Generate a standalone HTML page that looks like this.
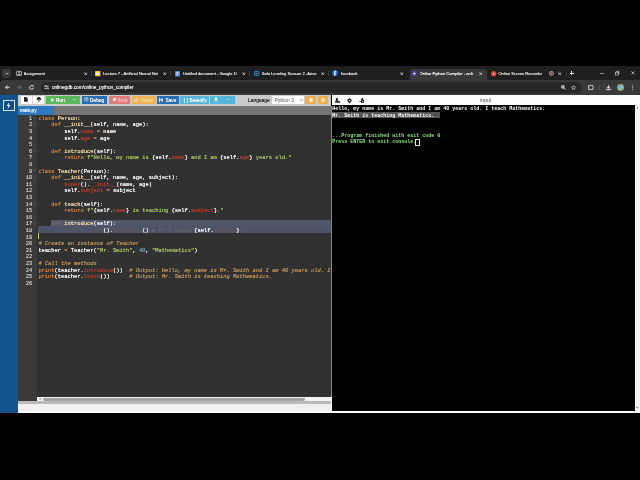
<!DOCTYPE html>
<html>
<head>
<meta charset="utf-8">
<title>Online Python Compiler</title>
<style>
html,body{margin:0;padding:0;background:#000;}
body{width:640px;height:480px;position:relative;overflow:hidden;will-change:transform;opacity:0.999;font-family:"Liberation Sans",sans-serif;}
.abs{position:absolute;}
svg{position:absolute;overflow:visible;}
#tabstrip{left:0;top:66.3px;width:640px;height:14px;background:#202020;}
#navbar{left:0;top:79.8px;width:640px;height:15.7px;background:#3a3a3a;border-radius:2.5px 0 0 0;}
.tabtxt{position:absolute;top:71.1px;font-size:4.08px;color:#e3e3e3;white-space:nowrap;line-height:5px;height:5px;overflow:hidden;text-shadow:0 0 0.35px #e3e3e3;}
.tx{position:absolute;top:71.6px;width:3.4px;height:3.4px;}
.sep{position:absolute;top:71px;width:0.6px;height:4.8px;background:#3e3e3e;}
#sidebar{left:0;top:95.4px;width:17.9px;height:318px;background:#13568f;}
#toolbar{left:17.9px;top:95.4px;width:313.6px;height:10.5px;background:#cbcbcb;}
.btn{position:absolute;top:95.6px;height:8.2px;}
.bt{position:absolute;top:97.95px;font-size:4.8px;line-height:5px;color:#fff;white-space:nowrap;text-shadow:0 0 0.3px #fff;}
#tabrow{left:17.9px;top:105.8px;width:313.6px;height:8.8px;background:#757575;}
#gutter{left:17.9px;top:114.5px;width:19.3px;height:286.5px;background:#3b3b3b;}
#code{left:37.2px;top:114.5px;width:294.3px;height:282.3px;background:#323232;overflow:hidden;}
.ln{position:absolute;left:17.9px;width:14.4px;text-align:right;font-family:"Liberation Mono",monospace;font-size:5.4px;line-height:6.6px;height:6.6px;color:#c4c4c4;text-shadow:0 0 0.3px #c4c4c4;}
.cl{position:absolute;left:1.2px;font-family:"Liberation Mono",monospace;font-size:5.41px;line-height:6.6px;height:6.6px;color:#ffffff;white-space:pre;text-shadow:0 0 0.35px currentColor;}
.cl span{text-shadow:0 0 0.35px currentColor;}
.k,.p{color:#cb8040;} .s{color:#a5c261;} .cl .v{color:#b53c2e;text-shadow:0 0 0.2px #b53c2e;} .c{color:#bc9458;font-style:italic;} .n{color:#6c99bb;} .f{color:#f6dba6;} .o{color:#b98a62;}
.cl .k2{color:#a26c5c;text-shadow:none;} .cl .k3{color:#595c69;text-shadow:none;} .cl .v3{color:#5e5564;text-shadow:none;} .cl .v4{color:#74505c;text-shadow:none;} .cl .s3{color:#66705f;text-shadow:none;} .cl .t3{color:#8a8f9c;text-shadow:none;}
#console{left:331.6px;top:105px;width:303.2px;height:306.1px;background:#000;overflow:hidden;}
.co{position:absolute;left:0.6px;font-family:"Liberation Mono",monospace;font-size:5px;line-height:6.6px;height:6.6px;color:#fff;white-space:pre;font-weight:bold;}
.g{color:#8fe88f;}
</style>
</head>
<body>
<!-- ============ chrome tab strip ============ -->
<div class="abs" id="tabstrip"></div>
<div class="abs" style="left:409.8px;top:68.6px;width:76.8px;height:11.6px;background:#3a3a3a;border-radius:2.6px 2.6px 0 0;"></div>
<div class="abs" id="navbar"></div>
<svg style="left:407.3px;top:77.4px" width="2.5" height="2.5" viewBox="0 0 2.5 2.5"><path d="M2.5 0 V2.5 H0 Q2.5 2.5 2.5 0 Z" fill="#3a3a3a"/></svg>
<svg style="left:486.6px;top:77.4px" width="2.5" height="2.5" viewBox="0 0 2.5 2.5"><path d="M0 0 V2.5 H2.5 Q0 2.5 0 0 Z" fill="#3a3a3a"/></svg>
<!-- tab search button -->
<div class="abs" style="left:2.1px;top:69.3px;width:8.8px;height:8.5px;border-radius:2.4px;background:#3b3b3b;"></div>
<svg style="left:4.6px;top:72px" width="3.8" height="3" viewBox="0 0 3.8 3"><path d="M0.7 0.8 L1.9 2.1 L3.1 0.8" stroke="#e8e8e8" stroke-width="0.75" fill="none"/></svg>

<!-- favicons -->
<svg style="left:15.9px;top:71px" width="5.9" height="4.8" viewBox="0 0 5.2 4.8" preserveAspectRatio="none"><rect x="0.35" y="0.35" width="4.5" height="4" rx="0.4" fill="none" stroke="#dcdcdc" stroke-width="0.7"/><circle cx="2.6" cy="1.8" r="0.8" fill="#dcdcdc"/><path d="M1.2 3.9 Q2.6 2.3 4 3.9 Z" fill="#dcdcdc"/></svg>
<svg style="left:95.2px;top:70.8px" width="5.4" height="5.2" viewBox="0 0 5.4 5.2"><rect x="0" y="0" width="5.4" height="5.2" rx="0.6" fill="#f4c430"/><rect x="1" y="1.5" width="3.4" height="2.2" fill="#fff3c2"/></svg>
<svg style="left:174.6px;top:70.6px" width="5" height="5.6" viewBox="0 0 5 5.6"><rect x="0" y="0" width="5" height="5.6" rx="0.6" fill="#4a86e8"/><rect x="1.1" y="1.5" width="2.8" height="0.6" fill="#fff"/><rect x="1.1" y="2.6" width="2.8" height="0.6" fill="#fff"/><rect x="1.1" y="3.7" width="1.8" height="0.6" fill="#fff"/></svg>
<svg style="left:253.6px;top:70.9px" width="5.4" height="5" viewBox="0 0 5.4 5"><rect x="0.4" y="0.4" width="4.6" height="4.2" rx="0.9" fill="#1d2a36" stroke="#3f9fd8" stroke-width="0.8"/><path d="M1.7 2.5 H3.7 M2.2 1.7 V3.3" stroke="#8fd0f5" stroke-width="0.6"/></svg>
<svg style="left:332.1px;top:70.4px" width="6" height="6" viewBox="0 0 5.8 5.8"><circle cx="2.9" cy="2.9" r="2.9" fill="#1666dc"/><path d="M3.25 5.7 V3.5 H4 L4.15 2.6 H3.25 V2.1 Q3.25 1.6 3.8 1.6 H4.2 V0.85 Q3.8 0.78 3.4 0.78 Q2.3 0.78 2.3 1.95 V2.6 H1.55 V3.5 H2.3 V5.7 Z" fill="#fff"/></svg>
<svg style="left:412px;top:70.8px" width="4.6" height="5" viewBox="0 0 4.6 5"><rect x="0" y="0" width="4.6" height="5" rx="0.8" fill="#4f3fa0"/><path d="M2.3 0.9 L2.8 2.1 L3.9 2.5 L2.8 2.9 L2.3 4.1 L1.8 2.9 L0.7 2.5 L1.8 2.1 Z" fill="#fff"/></svg>
<svg style="left:490.6px;top:70.7px" width="5.4" height="5.4" viewBox="0 0 5.4 5.4"><circle cx="2.7" cy="2.7" r="2.7" fill="#e0443a"/><circle cx="2.7" cy="2.7" r="0.9" fill="#ffd2cc"/></svg>
<svg style="left:548.8px;top:71px" width="4.8" height="4.8" viewBox="0 0 4.8 4.8"><circle cx="2.4" cy="2.4" r="2" fill="none" stroke="#e0c6c2" stroke-width="0.75"/><circle cx="2.4" cy="2.4" r="1.1" fill="#c9746e"/></svg>

<!-- tab titles -->
<div class="tabtxt" style="left:23.7px;width:56px">Assignment</div>
<div class="tabtxt" style="left:103.1px;width:55px">Lecture 7 - Artificial Neural Net</div>
<div class="tabtxt" style="left:182.9px;width:55px">Untitled document - Google D</div>
<div class="tabtxt" style="left:261.8px;width:55px">Solo Leveling Season 2 -Arise f</div>
<div class="tabtxt" style="left:341px;width:55px">facebook</div>
<div class="tabtxt" style="left:419.5px;width:55px;color:#fff">Online Python Compiler - onli</div>
<div class="tabtxt" style="left:498.4px;width:44px">Online Screen Recorder</div>

<!-- close x -->
<svg class="tx" style="left:83.6px" viewBox="0 0 3.4 3.4"><path d="M0.5 0.5 L2.9 2.9 M2.9 0.5 L0.5 2.9" stroke="#f0f0f0" stroke-width="0.78"/></svg>
<svg class="tx" style="left:162.7px" viewBox="0 0 3.4 3.4"><path d="M0.5 0.5 L2.9 2.9 M2.9 0.5 L0.5 2.9" stroke="#f0f0f0" stroke-width="0.78"/></svg>
<svg class="tx" style="left:241.9px" viewBox="0 0 3.4 3.4"><path d="M0.5 0.5 L2.9 2.9 M2.9 0.5 L0.5 2.9" stroke="#f0f0f0" stroke-width="0.78"/></svg>
<svg class="tx" style="left:320.6px" viewBox="0 0 3.4 3.4"><path d="M0.5 0.5 L2.9 2.9 M2.9 0.5 L0.5 2.9" stroke="#f0f0f0" stroke-width="0.78"/></svg>
<svg class="tx" style="left:399.7px" viewBox="0 0 3.4 3.4"><path d="M0.5 0.5 L2.9 2.9 M2.9 0.5 L0.5 2.9" stroke="#f0f0f0" stroke-width="0.78"/></svg>
<svg class="tx" style="left:478.8px" viewBox="0 0 3.4 3.4"><path d="M0.5 0.5 L2.9 2.9 M2.9 0.5 L0.5 2.9" stroke="#f0f0f0" stroke-width="0.78"/></svg>
<svg class="tx" style="left:557.8px" viewBox="0 0 3.4 3.4"><path d="M0.5 0.5 L2.9 2.9 M2.9 0.5 L0.5 2.9" stroke="#f0f0f0" stroke-width="0.78"/></svg>
<!-- separators -->
<div class="sep" style="left:90.9px"></div>
<div class="sep" style="left:169.7px"></div>
<div class="sep" style="left:249.2px"></div>
<div class="sep" style="left:328.2px"></div>
<div class="sep" style="left:565.6px"></div>
<!-- plus -->
<div class="abs" style="left:571.1px;top:71.4px;width:1px;height:4.1px;background:#f2f2f2;"></div>
<div class="abs" style="left:569.6px;top:72.95px;width:4.1px;height:1px;background:#f2f2f2;"></div>
<!-- window controls -->
<svg style="left:599.7px;top:73.2px" width="4" height="1" viewBox="0 0 4 1"><path d="M0.2 0.5 H3.8" stroke="#e8e8e8" stroke-width="0.6"/></svg>
<svg style="left:614.8px;top:71.2px" width="4.4" height="4.4" viewBox="0 0 4.4 4.4"><rect x="0.4" y="1.2" width="2.8" height="2.8" fill="none" stroke="#e8e8e8" stroke-width="0.6"/><path d="M1.3 1.2 V0.4 H4 V3.1 H3.2" fill="none" stroke="#e8e8e8" stroke-width="0.6"/></svg>
<svg style="left:630.6px;top:71.4px" width="3.8" height="3.8" viewBox="0 0 3.8 3.8"><path d="M0.4 0.4 L3.4 3.4 M3.4 0.4 L0.4 3.4" stroke="#f0f0f0" stroke-width="0.65"/></svg>

<!-- ============ nav bar ============ -->
<svg style="left:4.8px;top:85.1px" width="4.8" height="4.6" viewBox="0 0 4.8 4.6"><path d="M4.6 2.3 H0.8 M2.5 0.4 L0.6 2.3 L2.5 4.2" stroke="#f2f2f2" stroke-width="0.9" fill="none"/></svg>
<svg style="left:16.7px;top:85.1px" width="4.8" height="4.6" viewBox="0 0 4.8 4.6"><path d="M0.2 2.3 H4 M2.3 0.4 L4.2 2.3 L2.3 4.2" stroke="#7a7a7a" stroke-width="0.85" fill="none"/></svg>
<svg style="left:28.7px;top:84.9px" width="5" height="5" viewBox="0 0 5 5"><path d="M4.3 2.5 A1.85 1.85 0 1 1 3.6 1.05" stroke="#f0f0f0" stroke-width="0.85" fill="none"/><path d="M2.9 0.1 H4.5 V1.8 Z" fill="#f0f0f0"/></svg>
<div class="abs" style="left:41px;top:82.4px;width:541px;height:10.6px;border-radius:5.3px;background:#282828;"></div>
<svg style="left:43.6px;top:85.2px" width="5" height="4.6" viewBox="0 0 5 4.6"><path d="M0.2 1.2 H4.8 M0.2 3.4 H4.8" stroke="#ededed" stroke-width="0.7"/><rect x="0.9" y="0.4" width="1.5" height="1.6" fill="#ededed"/><rect x="2.9" y="2.6" width="1.5" height="1.6" fill="#ededed"/><rect x="1.3" y="0.85" width="0.7" height="0.7" fill="#282828"/><rect x="3.3" y="3.05" width="0.7" height="0.7" fill="#282828"/></svg>
<div class="abs" style="left:52px;top:85px;font-size:4.72px;line-height:5.6px;color:#ececec;white-space:nowrap;text-shadow:0 0 0.35px #ececec;">onlinegdb.com/online_python_compiler</div>
<!-- zoom, star -->
<svg style="left:561.2px;top:85.4px" width="4.8" height="4.8" viewBox="0 0 4.8 4.8"><circle cx="1.9" cy="1.9" r="1.5" fill="#9a9a9a" stroke="#dedede" stroke-width="0.7"/><path d="M3 3 L4.6 4.6" stroke="#dedede" stroke-width="0.9"/></svg>
<svg style="left:571.2px;top:85.3px" width="5" height="4.8" viewBox="0 0 5 4.8"><path d="M2.5 0.5 L3.1 1.9 L4.6 2 L3.45 3 L3.8 4.45 L2.5 3.65 L1.2 4.45 L1.55 3 L0.4 2 L1.9 1.9 Z" fill="none" stroke="#dcdcdc" stroke-width="0.55" stroke-linejoin="round"/></svg>
<!-- extension -->
<svg style="left:587.6px;top:84.3px" width="6.8" height="6" viewBox="0 0 6.8 6"><path d="M0.6 1.6 H1.9 A0.85 0.85 0 0 1 3.5 1.6 H4.8 V2.7 A0.85 0.85 0 0 1 4.8 4.3 V5.5 H0.6 Z" fill="none" stroke="#f0f0f0" stroke-width="0.8" stroke-linejoin="round"/></svg>
<div class="abs" style="left:599.2px;top:85.3px;width:0.5px;height:5px;background:#505050;"></div>
<!-- download -->
<svg style="left:605.8px;top:85.2px" width="5" height="5.2" viewBox="0 0 5 5.2"><path d="M2.5 0.2 V3.2 M1 1.9 L2.5 3.4 L4 1.9" stroke="#f0f0f0" stroke-width="0.9" fill="none"/><path d="M0.4 3.5 V4.7 H4.6 V3.5" stroke="#f0f0f0" stroke-width="0.85" fill="none"/></svg>
<!-- avatar -->
<svg style="left:616.9px;top:84.3px" width="7.2" height="7.2" viewBox="0 0 7.2 7.2"><circle cx="3.6" cy="3.6" r="3.5" fill="#86b17c"/><circle cx="3.8" cy="3.4" r="2.2" fill="#79a9cc"/><circle cx="2.6" cy="4.5" r="1.2" fill="#a5c78a"/><circle cx="4.6" cy="2.6" r="0.9" fill="#b9d6e8"/></svg>
<!-- menu -->
<svg style="left:631.9px;top:85px" width="1.2" height="5.6" viewBox="0 0 1.2 5.6"><circle cx="0.6" cy="0.8" r="0.55" fill="#e6e6e6"/><circle cx="0.6" cy="2.8" r="0.55" fill="#e6e6e6"/><circle cx="0.6" cy="4.8" r="0.55" fill="#e6e6e6"/></svg>

<!-- ============ page ============ -->
<div class="abs" id="sidebar"></div>
<div class="abs" style="left:2.7px;top:99.7px;width:10.3px;height:9.4px;border:1.1px solid #d4e6f6;background:#154e86;"></div>
<svg style="left:6.4px;top:101.9px" width="5" height="7" viewBox="0 0 4.6 6.8"><path d="M3 0.2 L0.5 3.7 H2.1 L1.5 6.6 L4.2 2.8 H2.5 Z" fill="#e8f3fc"/></svg>
<div class="abs" id="toolbar"></div>
<div class="abs" id="tabrow"></div>
<div class="abs" style="left:17.9px;top:105.8px;width:36.5px;height:8.8px;background:#2f7bbf;"></div>
<div class="abs" style="left:20px;top:107.5px;font-size:4.75px;line-height:5.6px;color:#fff;text-shadow:0 0 0.3px #fff;">main.py</div>

<!-- toolbar buttons -->
<div class="btn" style="left:20.6px;width:23.8px;background:#fdfdfd;"></div>
<div class="abs" style="left:32.2px;top:95.6px;width:0.5px;height:8.2px;background:#d8d8d8;"></div>
<svg style="left:24.4px;top:97.2px" width="3.8" height="4.9" viewBox="0 0 3.8 4.9"><path d="M0.1 0.1 H2.3 L3.7 1.5 V4.8 H0.1 Z" fill="#1a1a1a"/><path d="M2.3 0.1 V1.5 H3.7" fill="none" stroke="#777" stroke-width="0.35"/></svg>
<svg style="left:35.5px;top:97.4px" width="5.8" height="5" viewBox="0 0 5.8 5"><path d="M1.3 3 A1.25 1.25 0 0 1 1.4 0.9 A1.7 1.7 0 0 1 4.6 1.2 A1 1 0 0 1 4.6 3 Z" fill="#1a1a1a"/><path d="M2.9 4.9 V2.6" stroke="#1a1a1a" stroke-width="0.9" fill="none"/><path d="M1.7 3.3 L2.9 2 L4.1 3.3 Z" fill="#1a1a1a" stroke="#fdfdfd" stroke-width="0.3"/></svg>

<div class="btn" style="left:46.2px;width:34.2px;background:#5cb85c;"></div>
<svg style="left:50.7px;top:97.7px" width="3.4" height="4" viewBox="0 0 3.4 4"><path d="M0.2 0.1 L3.3 2 L0.2 3.9 Z" fill="#fff"/></svg>
<div class="bt" style="left:56px">Run</div>
<svg style="left:72.9px;top:99.1px" width="2.4" height="1.4" viewBox="0 0 2.4 1.4"><path d="M0.1 0.1 H2.3 L1.2 1.3 Z" fill="#e9f6e9"/></svg>

<div class="btn" style="left:81.8px;width:25px;background:#2b6fb2;"></div>
<svg style="left:84.3px;top:97.3px" width="4.6" height="4.6" viewBox="0 0 4.6 4.6"><circle cx="2.3" cy="2.3" r="1.8" fill="none" stroke="#fff" stroke-width="0.6"/><path d="M2.3 1.1 V2.3 H3.2" stroke="#fff" stroke-width="0.55" fill="none"/></svg>
<div class="bt" style="left:90px">Debug</div>

<div class="btn" style="left:108.6px;width:21.4px;background:#de7d7a;"></div>
<div class="abs" style="left:112.5px;top:98.1px;width:3.1px;height:3.1px;background:#f9e4e3;"></div>
<div class="bt" style="left:117.6px;color:#f7dcdb;text-shadow:none;">Stop</div>

<div class="btn" style="left:131.8px;width:24px;background:#efb458;"></div>
<svg style="left:134px;top:97.7px" width="4" height="3.8" viewBox="0 0 4 3.8"><path d="M0.4 1.1 V3.4 H3.5 V2.4" fill="none" stroke="#fdf2dc" stroke-width="0.65"/><path d="M1.5 2.4 Q1.8 0.9 3.3 0.9 M2.5 0.1 L3.6 0.9 L2.5 1.8" fill="none" stroke="#fdf2dc" stroke-width="0.55"/></svg>
<div class="bt" style="left:140.4px;color:#fbe6c2;text-shadow:none;">Share</div>

<div class="btn" style="left:157px;width:22px;background:#2b6fb2;"></div>
<svg style="left:159.4px;top:97.5px" width="3.8" height="4.2" viewBox="0 0 3.8 4.2"><path d="M0.1 0.1 H3.1 L3.7 0.7 V4.1 H0.1 Z" fill="#fff"/><rect x="1" y="0.1" width="1.7" height="1.3" fill="#2b6fb2"/><rect x="0.9" y="2.5" width="2" height="1.6" fill="#2b6fb2"/></svg>
<div class="bt" style="left:165.5px">Save</div>

<div class="btn" style="left:180px;width:29px;background:#56b7dc;"></div>
<div class="bt" style="left:183.6px;color:#f6fcff;text-shadow:0 0 0.2px #f6fcff;">{ } Beautify</div>
<div class="btn" style="left:210.1px;width:24.7px;background:#56b7dc;"></div>
<svg style="left:214.4px;top:97.4px" width="4" height="4.4" viewBox="0 0 4 4.4"><path d="M1.3 0.1 H2.7 V1.8 H3.7 L2 3.4 L0.3 1.8 H1.3 Z" fill="#fff"/><rect x="0.1" y="3.6" width="3.8" height="0.7" fill="#fff"/></svg>
<svg style="left:226.8px;top:99.1px" width="2.4" height="1.4" viewBox="0 0 2.4 1.4"><path d="M0.1 0.1 H2.3 L1.2 1.3 Z" fill="#eaf7fc"/></svg>

<div class="abs" style="left:248.1px;top:98.4px;font-size:4.85px;line-height:5.4px;color:#2e2e2e;text-shadow:0 0 0.3px #2e2e2e;">Language</div>
<div class="btn" style="left:272px;width:32.4px;background:#fdfdfd;top:95.8px;height:8px;"></div>
<div class="abs" style="left:274.4px;top:98.4px;font-size:4.95px;line-height:5.4px;color:#555;">Python 3</div>
<svg style="left:300.2px;top:98.8px" width="3" height="2" viewBox="0 0 3 2"><path d="M0.3 0.3 L1.5 1.6 L2.7 0.3" stroke="#333" stroke-width="0.6" fill="none"/></svg>
<div class="btn" style="left:305.4px;width:10.9px;background:#efb04f;"></div>
<div class="btn" style="left:317.6px;width:10.8px;background:#efb04f;"></div>
<svg style="left:309px;top:97.7px" width="4" height="4" viewBox="0 0 4 4"><circle cx="2" cy="2" r="1.9" fill="#fff6e3"/><rect x="1.75" y="1.7" width="0.5" height="1.4" fill="#efb04f"/><rect x="1.75" y="0.8" width="0.5" height="0.5" fill="#efb04f"/></svg>
<svg style="left:321px;top:97.7px" width="4" height="4" viewBox="0 0 4 4"><circle cx="2" cy="2" r="1.9" fill="#fff6e3"/><circle cx="2" cy="2" r="0.7" fill="#efb04f"/></svg>

<!-- editor -->
<div class="abs" id="gutter"></div>
<div class="abs" id="code">
<div class="abs" style="left:13.9px;top:105.2px;width:290px;height:6.7px;background:#52586c;"></div>
<div class="abs" style="left:0.9px;top:111.8px;width:300px;height:6.7px;background:#4f5568;"></div>
<div class="abs" style="left:0.8px;top:118.6px;width:0.6px;height:6.3px;background:#c8d870;"></div>
<div class="cl" style="top:1.35px"><span class="k">class</span> <span class="f">Person</span>:</div>
<div class="cl" style="top:7.95px">    <span class="k">def</span> <span class="f">__init__</span>(self, name, age):</div>
<div class="cl" style="top:14.55px">        self.<span class="v">name</span> <span class="o">=</span> name</div>
<div class="cl" style="top:21.15px">        self.<span class="v">age</span> <span class="o">=</span> age</div>
<div class="cl" style="top:27.75px"></div>
<div class="cl" style="top:34.35px">    <span class="k">def</span> <span class="f">introduce</span>(self):</div>
<div class="cl" style="top:40.95px">        <span class="k">return</span> <span class="s">f"Hello, my name is </span>{self.<span class="v">name</span>}<span class="s"> and I am </span>{self.<span class="v">age</span>}<span class="s"> years old."</span></div>
<div class="cl" style="top:47.55px"></div>
<div class="cl" style="top:54.15px"><span class="k">class</span> <span class="f">Teacher</span>(Person):</div>
<div class="cl" style="top:60.75px">    <span class="k">def</span> <span class="f">__init__</span>(self, name, age, subject):</div>
<div class="cl" style="top:67.35px">        <span class="v">super</span>().<span class="v">__init__</span>(name, age)</div>
<div class="cl" style="top:73.95px">        self.<span class="v">subject</span> <span class="o">=</span> subject</div>
<div class="cl" style="top:80.55px"></div>
<div class="cl" style="top:87.15px">    <span class="k">def</span> <span class="f">teach</span>(self):</div>
<div class="cl" style="top:93.75px">        <span class="k">return</span> <span class="s">f"</span>{self.<span class="v">name</span>}<span class="s"> is teaching </span>{self.<span class="v">subject</span>}<span class="s">."</span></div>
<div class="cl" style="top:100.35px"></div>
<div class="cl" style="top:106.95px">    <span class="k2">def</span> <span class="f">introduce</span>(self):</div>
<div class="cl" style="top:113.55px">        <span class="k3">return</span> <span class="v3">super</span>().<span class="v4">introduce</span>()<span class="t3"> + </span><span class="s3">f" I teach </span>{self.<span class="v4">subject</span>}<span class="s3">."</span></div>
<div class="cl" style="top:120.15px"></div>
<div class="cl" style="top:126.75px"><span class="c"># Create an instance of Teacher</span></div>
<div class="cl" style="top:133.35px">teacher <span class="o">=</span> Teacher(<span class="s">"Mr. Smith"</span>, <span class="n">40</span>, <span class="s">"Mathematics"</span>)</div>
<div class="cl" style="top:139.95px"></div>
<div class="cl" style="top:146.55px"><span class="c"># Call the methods</span></div>
<div class="cl" style="top:153.15px"><span class="p">print</span>(teacher.<span class="v">introduce</span>())  <span class="c"># Output: Hello, my name is Mr. Smith and I am 40 years old. I teach Mathematics.</span></div>
<div class="cl" style="top:159.75px"><span class="p">print</span>(teacher.<span class="v">teach</span>())      <span class="c"># Output: Mr. Smith is teaching Mathematics.</span></div>
<div class="cl" style="top:166.35px"></div>
</div>
<div class="ln" style="top:115.85px">1</div>
<svg style="left:33.6px;top:117.65px" width="1.8" height="1.4" viewBox="0 0 1.8 1.4"><path d="M0.1 0.2 H1.7 L0.9 1.3 Z" fill="#8a8a8a"/></svg>
<div class="ln" style="top:122.45px">2</div>
<svg style="left:33.6px;top:124.25px" width="1.8" height="1.4" viewBox="0 0 1.8 1.4"><path d="M0.1 0.2 H1.7 L0.9 1.3 Z" fill="#8a8a8a"/></svg>
<div class="ln" style="top:129.05px">3</div>
<div class="ln" style="top:135.65px">4</div>
<div class="ln" style="top:142.25px">5</div>
<div class="ln" style="top:148.85px">6</div>
<svg style="left:33.6px;top:150.65px" width="1.8" height="1.4" viewBox="0 0 1.8 1.4"><path d="M0.1 0.2 H1.7 L0.9 1.3 Z" fill="#8a8a8a"/></svg>
<div class="ln" style="top:155.45px">7</div>
<div class="ln" style="top:162.05px">8</div>
<div class="ln" style="top:168.65px">9</div>
<svg style="left:33.6px;top:170.45px" width="1.8" height="1.4" viewBox="0 0 1.8 1.4"><path d="M0.1 0.2 H1.7 L0.9 1.3 Z" fill="#8a8a8a"/></svg>
<div class="ln" style="top:175.25px">10</div>
<svg style="left:33.6px;top:177.05px" width="1.8" height="1.4" viewBox="0 0 1.8 1.4"><path d="M0.1 0.2 H1.7 L0.9 1.3 Z" fill="#8a8a8a"/></svg>
<div class="ln" style="top:181.85px">11</div>
<div class="ln" style="top:188.45px">12</div>
<div class="ln" style="top:195.05px">13</div>
<div class="ln" style="top:201.65px">14</div>
<svg style="left:33.6px;top:203.45px" width="1.8" height="1.4" viewBox="0 0 1.8 1.4"><path d="M0.1 0.2 H1.7 L0.9 1.3 Z" fill="#8a8a8a"/></svg>
<div class="ln" style="top:208.25px">15</div>
<div class="ln" style="top:214.85px">16</div>
<div class="ln" style="top:221.45px">17</div>
<svg style="left:33.6px;top:223.25px" width="1.8" height="1.4" viewBox="0 0 1.8 1.4"><path d="M0.1 0.2 H1.7 L0.9 1.3 Z" fill="#8a8a8a"/></svg>
<div class="ln" style="top:228.05px">18</div>
<div class="ln" style="top:234.65px">19</div>
<div class="ln" style="top:241.25px">20</div>
<div class="ln" style="top:247.85px">21</div>
<div class="ln" style="top:254.45px">22</div>
<div class="ln" style="top:261.05px">23</div>
<div class="ln" style="top:267.65px">24</div>
<div class="ln" style="top:274.25px">25</div>
<div class="ln" style="top:280.85px">26</div>

<div class="abs" style="left:330.5px;top:105.8px;width:1.1px;height:291px;background:#868686;"></div>
<div class="abs" style="left:330.5px;top:396.7px;width:1.2px;height:16.6px;background:#f4f4f4;z-index:5;"></div>
<!-- console toolbar -->
<div class="abs" style="left:331.5px;top:95.4px;width:308.5px;height:9.8px;background:#fff;"></div>
<div class="abs" style="left:480.2px;top:98.4px;font-size:5.1px;line-height:5.4px;color:#444;">input</div>
<svg style="left:334.8px;top:98.3px" width="5.2" height="4.8" viewBox="0 0 5.2 4.8"><path d="M0.8 0.2 H3 V1.7 H2 L3.4 3 H0.8 Z" fill="#1c1c1c"/><rect x="0.1" y="3.1" width="5" height="1.6" fill="#1c1c1c"/></svg>
<svg style="left:347.2px;top:98px" width="5" height="5.4" viewBox="0 0 5 5.4"><path d="M2.5 0.1 L4.9 2 L3.9 4 L2.5 5.3 L1.1 4 L0.1 2 Z" fill="#1c1c1c"/><circle cx="2.5" cy="2.5" r="0.75" fill="#fff"/></svg>
<svg style="left:359.4px;top:98.2px" width="5.2" height="5" viewBox="0 0 5.2 5"><path d="M2.2 0.2 H4.2 V2 H5 V4.8 H2 V3.8 H0.2 V2.9 H2 V2 H2.2 Z" fill="#1c1c1c"/><rect x="3" y="2.7" width="0.9" height="0.9" fill="#fff"/></svg>
<div class="abs" id="console">
<div class="abs" style="left:0;top:6.7px;width:108px;height:6.3px;background:#555;"></div>
<div class="co" style="top:1.0px">Hello, my name is Mr. Smith and I am 40 years old. I teach Mathematics.</div>
<div class="co" style="top:7.6px">Mr. Smith is teaching Mathematics.</div>
<div class="co g" style="top:27.6px">...Program finished with exit code 0</div>
<div class="co g" style="top:34.2px">Press ENTER to exit console.</div>
<div class="abs" style="left:83.6px;top:33.9px;width:2.4px;height:5px;border:0.55px solid #e4e4e4;"></div>
</div>
<!-- console scrollbar -->
<div class="abs" style="left:634.8px;top:105px;width:5.2px;height:306.1px;background:#f6f6f6;"></div>
<svg style="left:636.3px;top:107px" width="2.6" height="1.6" viewBox="0 0 2.6 1.6"><path d="M0.1 1.5 H2.5 L1.3 0.1 Z" fill="#777"/></svg>
<svg style="left:636.3px;top:407.2px" width="2.6" height="1.6" viewBox="0 0 2.6 1.6"><path d="M0.1 0.1 H2.5 L1.3 1.5 Z" fill="#777"/></svg>
<div class="abs" style="left:331.5px;top:411px;width:308.5px;height:2.3px;background:#fcfcfc;"></div>
<!-- editor h scrollbar -->
<div class="abs" style="left:37.2px;top:396.7px;width:294.3px;height:4.7px;background:#f4f4f4;"></div>
<div class="abs" style="left:43px;top:397.9px;width:262.2px;height:2.8px;background:#a6a6a6;border-radius:1.4px;"></div>
<svg style="left:38.6px;top:398.3px" width="1.6" height="2.2" viewBox="0 0 1.6 2.2"><path d="M1.5 0.1 V2.1 L0.1 1.1 Z" fill="#666"/></svg>
<div class="abs" style="left:17.9px;top:401.3px;width:313.6px;height:12px;background:#f1f1f1;"></div>
<div class="abs" style="left:17.9px;top:401.3px;width:313.6px;height:2.4px;background:#bcbcbc;"></div>
<div class="abs" style="left:17.9px;top:411.2px;width:313.6px;height:2.1px;background:#fcfcfc;"></div>
</body>
</html>
